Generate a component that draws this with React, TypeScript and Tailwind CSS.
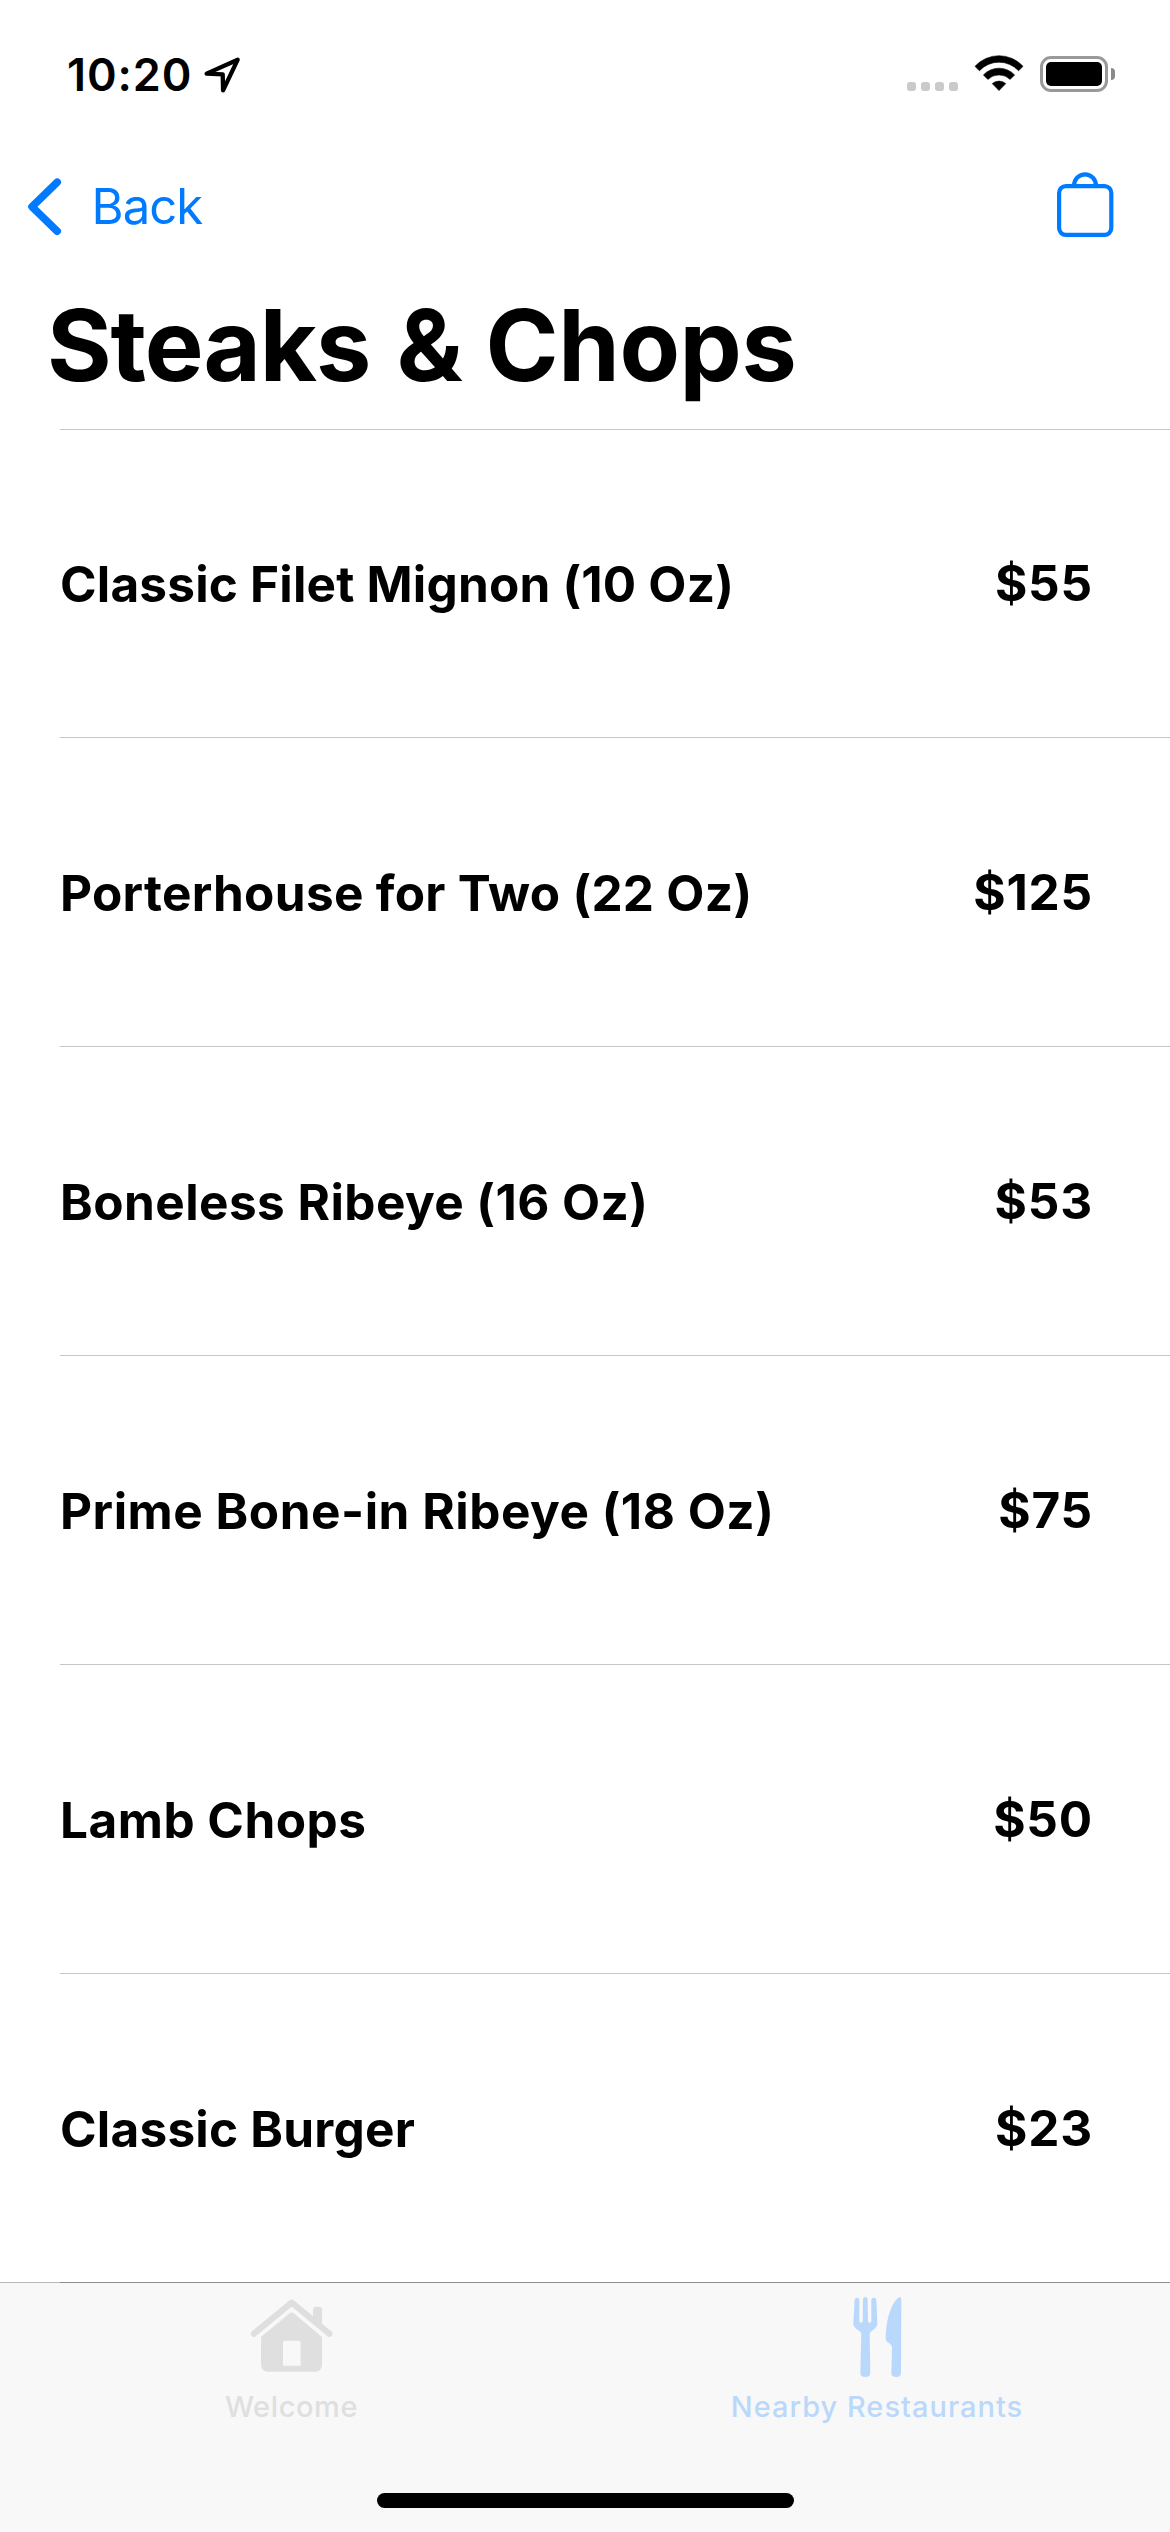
const dishes = [
  { name: "Classic Filet Mignon (10 Oz)", price: "$55", tracking: "tracking-[0.2px]" },
  { name: "Porterhouse for Two (22 Oz)", price: "$125", tracking: "tracking-[0.3px]" },
  { name: "Boneless Ribeye (16 Oz)", price: "$53", tracking: "tracking-[0.44px]" },
  { name: "Prime Bone-in Ribeye (18 Oz)", price: "$75", tracking: "tracking-[0.52px]" },
  { name: "Lamb Chops", price: "$50", tracking: "tracking-[0.5px]" },
  { name: "Classic Burger", price: "$23", tracking: "tracking-[0.23px]" },
];

function StatusBar() {
  return (
    <div className="flex h-[141px] items-start">
      <span className="ml-[67px] mt-[48px] text-[45px] font-semibold leading-[54px] tracking-[0.9px]">10:20</span>
      <svg className="ml-[9px] mt-[54px] h-[42px] w-[42px]" viewBox="201 54 42 42" fill="none" stroke="#000" strokeWidth="4.3" strokeLinejoin="round">
        <path d="M237.7 59.7 L206.6 73.6 L222.7 74.4 L223.1 90.4 Z" />
      </svg>
      <div className="ml-auto mt-[82px] flex gap-[5px]">
        <i className="h-[9px] w-[9px] rounded-[3px] bg-[#cacaca]" />
        <i className="h-[9px] w-[9px] rounded-[3px] bg-[#cacaca]" />
        <i className="h-[9px] w-[9px] rounded-[3px] bg-[#cacaca]" />
        <i className="h-[9px] w-[9px] rounded-[3px] bg-[#cacaca]" />
      </div>
      <svg className="ml-[16px] mt-[54px] h-[38px] w-[50px]" viewBox="974 54 50 38">
        <path d="M975 66.3 A32.5 32.5 0 0 1 1023 66.3 L1018.6 70.8 A26.6 26.6 0 0 0 979.4 70.8 Z M983.4 74.9 A21.5 21.5 0 0 1 1014.6 74.9 L1010.1 79.4 A16 16 0 0 0 987.9 79.4 Z M992.2 83.6 A10.5 10.5 0 0 1 1005.8 83.6 L999 90.6 Z" stroke="#000" strokeWidth="0.6" strokeLinejoin="round" />
      </svg>
      <div className="ml-[16px] mt-[56px] flex items-center gap-[3px]">
        <div className="h-[36px] w-[68px] rounded-[11px] border-[3px] border-[#999] p-[3px]">
          <div className="h-full w-full rounded-[5px] bg-black" />
        </div>
        <div className="h-[12px] w-[4px] rounded-r-[4px] bg-[#8a8a8a]" />
      </div>
      <div className="w-[55px]" />
    </div>
  );
}

function NavBar() {
  return (
    <div className="flex h-[132px] items-start text-[#007aff]">
      <svg className="ml-[26px] mt-[35px] h-[61px] w-[38px]" viewBox="26 176 38 61" fill="none" stroke="currentColor" strokeWidth="7.6" strokeLinecap="round" strokeLinejoin="round">
        <path d="M57.2 182.2 L32 206.7 L57.2 231.2" />
      </svg>
      <span className="ml-[27.5px] mt-[36px] text-[49px] leading-[60px] tracking-[-0.9px]">Back</span>
      <svg className="ml-auto mr-[54px] mt-[29px] h-[70px] w-[62px]" viewBox="1054 170 62 70" fill="none" stroke="currentColor" strokeWidth="4.2">
        <rect x="1059.1" y="186.1" width="52.2" height="48.8" rx="6.8" />
        <path d="M1074.1 186 V185.3 A10.9 11 0 0 1 1095.9 185.3 V186" />
      </svg>
    </div>
  );
}

function HouseIcon() {
  return (
    <svg className="h-[75px] w-[83.33px]" viewBox="90 115 250 225" fill="currentColor">
      <path d="M102 222 L215 129 L328 222" fill="none" stroke="currentColor" strokeWidth="19" strokeLinecap="round" strokeLinejoin="round" />
      <path d="M279 180 V150 Q279 141 288 141 H297 Q306 141 306 150 V203 Z" />
      <path fillRule="evenodd" d="M123 232 L207 162 Q215 155 223 162 L306 232 V314 Q306 336 284 336 H145 Q123 336 123 314 Z M195 243 Q189 243 189 249 V318 H242 V249 Q242 243 236 243 Z" />
    </svg>
  );
}

function ForkKnifeIcon() {
  return (
    <svg className="h-[82px] w-[50.67px]" viewBox="455 108 152 246" fill="currentColor">
      <path d="M463 119 Q464 113 470 113 Q476 113 477 119 L477 184 Q482 193 487 184 L488 118 Q489 111 495 111 Q501 111 502 118 L503 184 Q508 193 513 184 L513 119 Q514 113 520.5 113 Q527 113 528 119 L531 190 Q531 202 517 211 Q508 216 508 223 L510 338 Q510 351 495 351 Q480 351 480 338 L483 223 Q483 216 474 211 Q459 202 459 190 Z" />
      <path d="M597 111 Q603 112 603 118 L602 338 Q602 351 587.5 351 Q573 351 573 338 L575 262 Q575 254 566 249 Q556 244 556 235 C557 180 572 128 597 111 Z" />
    </svg>
  );
}

export default function App() {
  return (
    <div className="flex h-[2532px] w-[1170px] flex-col overflow-hidden bg-white font-['Inter',sans-serif] text-black">
      <StatusBar />
      <NavBar />
      <h1 className="h-[156px] pl-[47px] pt-[12px] text-[98.8px] font-bold leading-[120px] tracking-[-0.4px]">
        <span className="mr-[3.5px] tracking-[-1.1px]">Steaks</span> &amp; Chops
      </h1>
      <ul className="ml-[60px] border-t border-[#c6c6c8]">
        {dishes.map((d, i) => (
          <li
            key={d.name}
            className={`flex items-start justify-between pr-[77px] text-[49.5px] font-bold leading-[60px] ${
              i === 0 ? "h-[308px] pt-[124px]" : "h-[309px] pt-[125px]"
            } ${i < dishes.length - 1 ? "border-b border-[#c6c6c8]" : ""}`}
          >
            <span className={d.tracking}>{d.name}</span>
            <span className="-mt-px tracking-[0.8px]">{d.price}</span>
          </li>
        ))}
      </ul>
      <footer className="-mt-px flex flex-1 flex-col bg-[#f8f8f8]">
        <div className="flex h-px">
          <div className="w-[60px] bg-[#b9b9b9]" />
          <div className="flex-1 bg-[#8e8e8f]" />
        </div>
        <nav className="grid grid-cols-2 text-[29px] font-medium leading-[36px]">
          <div className="flex flex-col items-center pr-[2px] text-[#dfdfdf]">
            <div className="h-[106px] pt-[15px]"><HouseIcon /></div>
            <span className="tracking-[0.6px]">Welcome</span>
          </div>
          <div className="flex flex-col items-center pr-[1px] text-[#bad8fb]">
            <div className="h-[106px] pt-[13px]"><ForkKnifeIcon /></div>
            <span className="tracking-[1px]">Nearby Restaurants</span>
          </div>
        </nav>
        <div className="mx-auto mb-[24px] mt-auto h-[15px] w-[417px] rounded-full bg-black" />
      </footer>
    </div>
  );
}
